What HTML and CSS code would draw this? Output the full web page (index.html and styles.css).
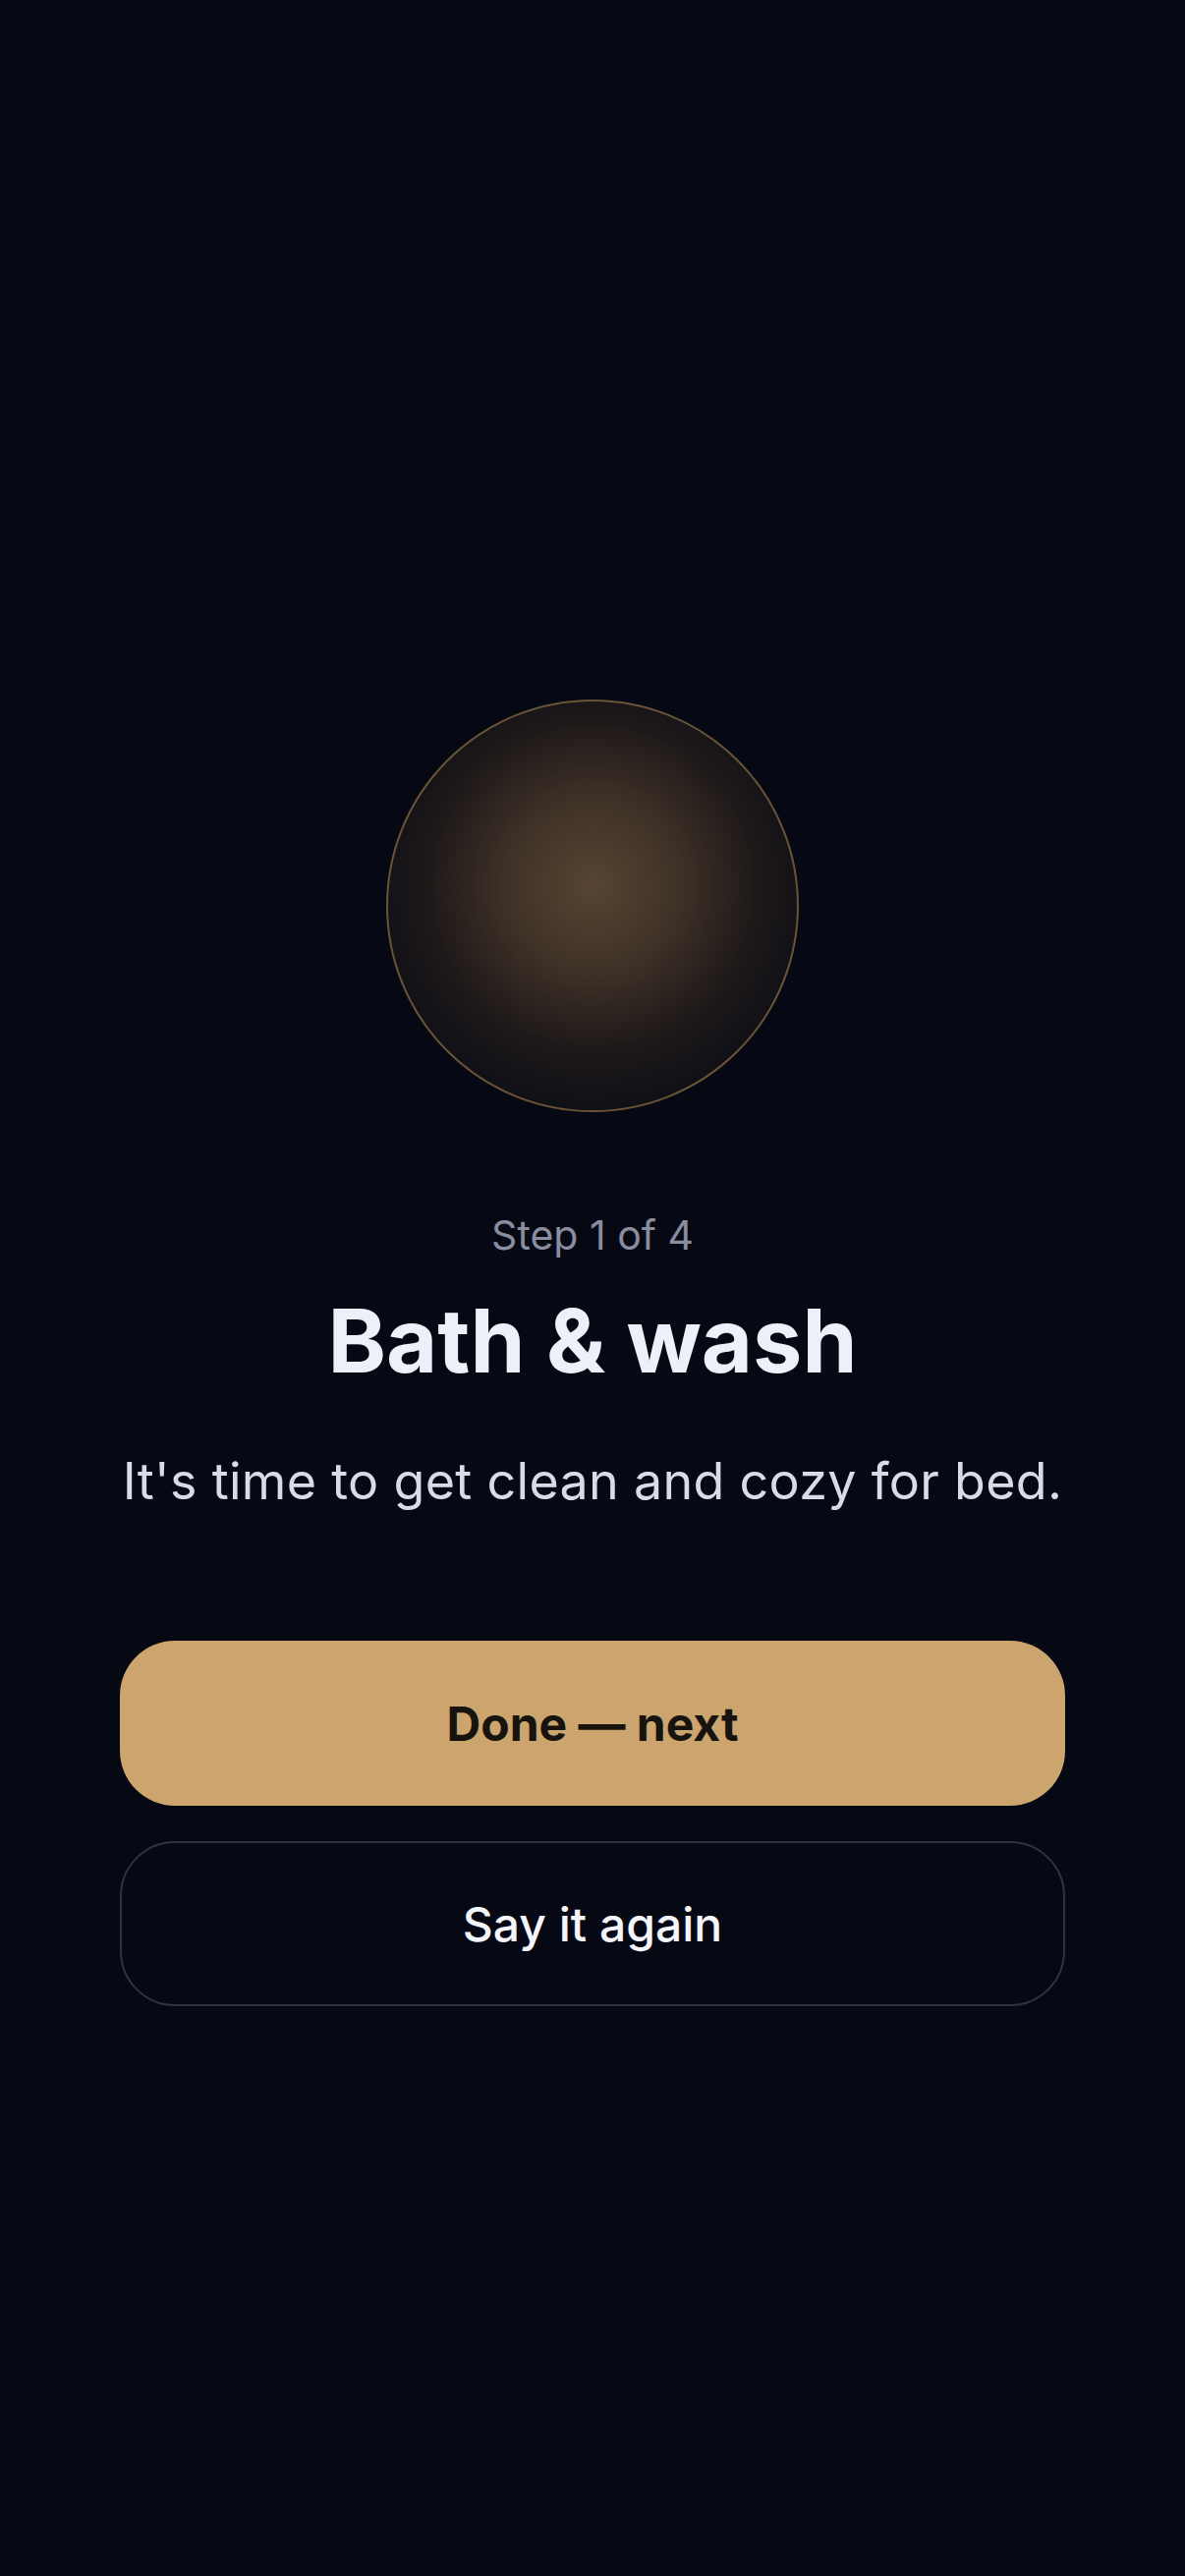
FILE: index.html
```html
<!DOCTYPE html>
<html lang="en">
<head>
    <meta charset="UTF-8">
    <meta name="viewport" content="width=device-width, initial-scale=1.0">
    <title>Bedtime Routine</title>
    <link rel="stylesheet" href="styles.css">
</head>
<body>
    <main class="screen">
        <div class="orb"></div>
        <p class="step">Step 1 of 4</p>
        <h1 class="title">Bath &amp; wash</h1>
        <p class="lead">It's time to get clean and cozy for bed.</p>
        <div class="actions">
            <button class="btn btn-primary">Done — next</button>
            <button class="btn btn-ghost">Say it again</button>
        </div>
    </main>
</body>
</html>
```

FILE: styles.css
```css
body, html {
    margin: 0;
    padding: 0;
    background-color: #060913;
    font-family: Inter, "Noto Sans", sans-serif;
    color: #eef0f8;
}
.screen {
    min-height: 100vh;
    box-sizing: border-box;
    display: flex;
    flex-direction: column;
    align-items: center;
    text-align: center;
    padding: 712px 122px 0;
}
.orb {
    width: 416px;
    height: 416px;
    border-radius: 50%;
    border: 2px solid #6a5438;
    background: radial-gradient(circle at 50% 45%, #574532 0%, #3d3026 30%, #1d1819 55%, #0b0d16 80%, #060913 100%);
}
.step {
    margin: 101px 0 0;
    font-size: 41px;
    line-height: 49px;
    color: #8a8da0;
}
.title {
    margin: 34px 0 0;
    font-size: 90px;
    line-height: 98px;
    font-weight: 700;
    color: #eef0f9;
}
.lead {
    margin: 60px 0 0;
    font-size: 52px;
    line-height: 68px;
    letter-spacing: 0.3px;
    white-space: nowrap;
    color: #d8dbe8;
}
.actions {
    margin-top: 128px;
    width: 100%;
    display: flex;
    flex-direction: column;
    gap: 36px;
}
.btn {
    height: 168px;
    border-radius: 56px;
    font-family: inherit;
    font-size: 48px;
    cursor: pointer;
}
.btn-primary {
    background-color: #cca46d;
    border: none;
    color: #17130f;
    font-weight: 700;
}
.btn-ghost {
    background-color: transparent;
    border: 2px solid #2f3243;
    color: #f4f5fb;
    font-weight: 500;
}
```
